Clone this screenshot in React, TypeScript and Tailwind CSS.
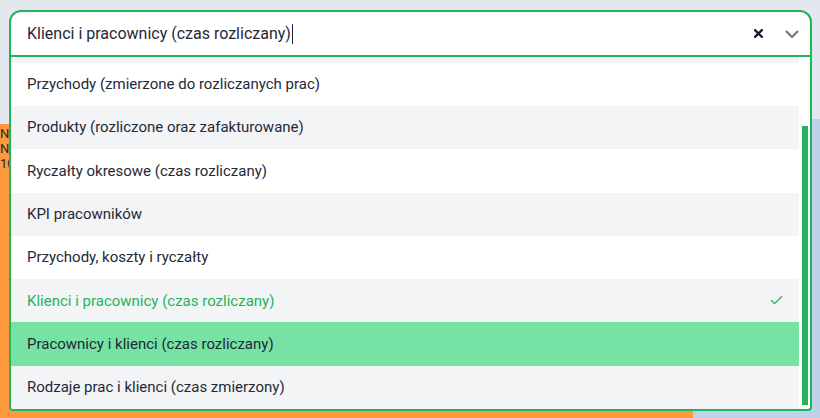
import React from 'react';
import { Check } from 'lucide-react';

const options = [
  'Klienci (czas rozliczany)',
  'Przychody (zmierzone do rozliczanych prac)',
  'Produkty (rozliczone oraz zafakturowane)',
  'Ryczałty okresowe (czas rozliczany)',
  'KPI pracowników',
  'Przychody, koszty i ryczałty',
  'Klienci i pracownicy (czas rozliczany)',
  'Pracownicy i klienci (czas rozliczany)',
  'Rodzaje prac i klienci (czas zmierzony)',
];

const selected = 'Klienci i pracownicy (czas rozliczany)';
const hovered = 'Pracownicy i klienci (czas rozliczany)';

const ClearIcon = () => (
  <svg width="9" height="9" viewBox="0 0 9 9" className="text-[#111827]">
    <path d="M1.2 1.2 L7.8 7.8 M7.8 1.2 L1.2 7.8" stroke="currentColor" strokeWidth="2.3" strokeLinecap="square" />
  </svg>
);

const ChevronIcon = () => (
  <svg width="14" height="8" viewBox="0 0 14 8" className="text-[#6b7280]">
    <path d="M1 1 L7 7 L13 1" stroke="currentColor" strokeWidth="2" fill="none" />
  </svg>
);

const OptionRow = ({ label, index }: { label: string; index: number }) => {
  const isSelected = label === selected;
  const isHovered = label === hovered;
  const stripe = index % 2 === 0 ? 'bg-[#f3f4f6]' : 'bg-white';

  return (
    <div
      className={`flex h-[43.3px] shrink-0 items-center justify-between pl-4 pr-[15px] text-[15px] ${
        isHovered ? 'bg-[#76e2a4]' : stripe
      } ${isSelected ? 'text-[#22b45a]' : 'text-[#1f2937]'}`}
    >
      <span>{label}</span>
      {isSelected && <Check size={15} strokeWidth={2.2} className="text-[#22b45a]" />}
    </div>
  );
};

export default function App() {
  return (
    <div className="relative h-[418px] w-[820px] overflow-hidden bg-[#e3e7ee] font-['Roboto',sans-serif]">
      {/* page underneath the open select */}
      <div className="h-[119px]" />
      <div className="flex h-[299px]">
        <div className="mt-[5px] w-[693px] bg-[#fe9a3d] text-[13px] leading-[15px] text-[#1f2937]">
          <div className="pt-[2px]">Nowe zlecenia</div>
          <div>Nieopłacone faktury</div>
          <div>10 ostatnich dni</div>
        </div>
        <div className="flex-1 bg-[#bfd2ec]" />
      </div>

      {/* select */}
      <div className="absolute left-[9px] top-[10px] flex w-[803px] flex-col">
        <div className="flex h-[47px] items-center rounded-t-[12px] border-2 border-[#22b45a] bg-white pl-4 pr-[11px]">
          <span className="text-[16px] text-[#1f2937]">{selected}</span>
          <span className="ml-[1px] h-[20px] w-px bg-[#1f2937]" />
          <div className="ml-auto flex items-center gap-[22px]">
            <ClearIcon />
            <ChevronIcon />
          </div>
        </div>

        <div className="flex h-[354px] overflow-hidden rounded-b-[4px] border-x-2 border-b-2 border-[#22b45a] bg-white">
          <div className="flex flex-1 flex-col overflow-hidden">
            <div className="-mt-[37.6px] flex flex-col">
              {options.map((label, i) => (
                <OptionRow key={label} label={label} index={i} />
              ))}
            </div>
          </div>
          <div className="flex w-[11px] shrink-0 flex-col pl-[3px] pr-[2px] pt-[69px] pb-[4px]">
            <div className="flex-1 bg-[#22b45a]" />
          </div>
        </div>
      </div>
    </div>
  );
}
